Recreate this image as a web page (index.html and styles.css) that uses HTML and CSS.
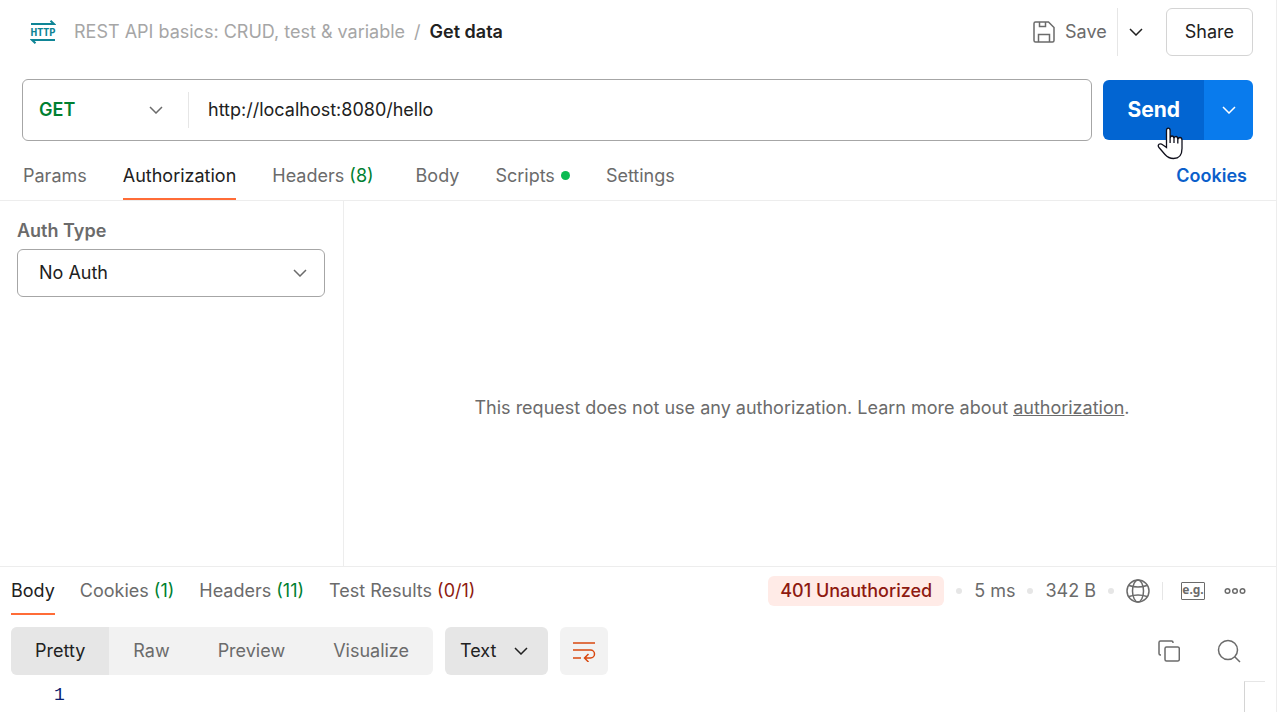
FILE: index.html
```html
<!DOCTYPE html>
<html lang="en">
<head>
<meta charset="utf-8">
<meta name="viewport" content="width=device-width, initial-scale=1">
<title>Get data</title>
<link rel="stylesheet" href="styles.css">
</head>
<body>
<svg class="symbols" aria-hidden="true">
  <symbol id="chevron" viewBox="0 0 14 8"><path d="M1 1l6 6 6-6"/></symbol>
</svg>
<main class="app">
  <header class="header">
    <svg class="http-icon" viewBox="0 0 26 24" role="img" aria-label="HTTP">
      <path d="M1 4h23L20.500 .7M25 20H2L5.500 23.300"/>
      <text x="13" y="16" text-anchor="middle">HTTP</text>
    </svg>
    <nav class="breadcrumb" aria-label="Breadcrumb">
      <a href="#collection">REST API basics: CRUD, test &amp; variable</a>
      <span>/</span>
      <strong>Get data</strong>
    </nav>
    <div class="save-group">
      <button class="save" type="button">
        <svg class="icon-save" viewBox="0 0 22 22" aria-hidden="true"><path d="M2.500 1H15.500L21 6.500V19.500Q21 21 19.500 21H2.500Q1 21 1 19.500V2.500Q1 1 2.500 1ZM6.500 1V5.500H12.500V1M5.500 21V13.500H16.500V21"/></svg>
        Save
      </button>
      <button class="save-more" type="button" aria-label="Save options"><svg class="chevron"><use href="#chevron"/></svg></button>
    </div>
    <button class="share" type="button">Share</button>
  </header>

  <form class="request">
    <div class="url-box">
      <div class="select method">
        <select aria-label="Method"><option>GET</option></select>
        <svg class="chevron"><use href="#chevron"/></svg>
      </div>
      <input class="url" type="text" aria-label="Request URL" value="http://localhost:8080/hello">
    </div>
    <div class="send-group">
      <button class="send" type="button">Send</button>
      <button class="send-more" type="button" aria-label="Send options"><svg class="chevron"><use href="#chevron"/></svg></button>
      <svg class="pointer" viewBox="0 0 26 33" aria-hidden="true"><path d="M9.500 20.500V3.500Q9.500 1.200 11.300 1.200T13.100 3.500V11.500Q13.300 9 15 9T17 11.500Q17.300 9.500 19 9.500T20.800 12.500Q21.300 10.500 23 10.500T25 13V21.500Q25 31.500 16.500 31.500Q11.500 31.500 8 27.500L2 20.500Q.5 18.500 2 17.300T6 18ZM13.100 11.500V16M17 11.500V16M20.800 12.500V16.500"/></svg>
    </div>
  </form>

  <nav class="tabs" aria-label="Request">
    <button type="button">Params</button>
    <button type="button" class="active">Authorization</button>
    <button type="button">Headers <span class="ok">(8)</span></button>
    <button type="button">Body</button>
    <button type="button">Scripts<i class="script-dot"></i></button>
    <button type="button">Settings</button>
    <a class="cookies" href="#cookies">Cookies</a>
  </nav>

  <section class="auth">
    <div class="auth-side">
      <label for="auth-type">Auth Type</label>
      <div class="select auth-select">
        <select id="auth-type"><option>No Auth</option></select>
        <svg class="chevron"><use href="#chevron"/></svg>
      </div>
    </div>
    <div class="auth-info">
      <p>This request does not use any authorization. Learn more about <a href="#authorization">authorization</a>.</p>
    </div>
  </section>

  <section class="response">
    <div class="response-bar">
      <nav class="response-tabs" aria-label="Response">
        <button type="button" class="active">Body</button>
        <button type="button">Cookies <span class="ok">(1)</span></button>
        <button type="button">Headers <span class="ok">(11)</span></button>
        <button type="button">Test Results <span class="fail">(0/1)</span></button>
      </nav>
      <div class="meta">
        <span class="status">401 Unauthorized</span>
        <i class="dot"></i>
        <span>5 ms</span>
        <i class="dot"></i>
        <span>342 B</span>
        <i class="dot"></i>
        <button class="icon-button" type="button" aria-label="Network">
          <svg width="24" height="24" viewBox="0 0 24 24"><circle cx="12" cy="12" r="11"/><ellipse cx="12" cy="12" rx="5.500" ry="11"/><path d="M3 6.500Q12 9.500 21 6.500M3 17.500Q12 14.500 21 17.500"/></svg>
        </button>
      </div>
      <div class="actions">
        <button class="eg" type="button">e.g.</button>
        <button class="icon-button" type="button" aria-label="More actions">
          <svg width="22" height="8" viewBox="0 0 22 8"><circle cx="3.500" cy="4" r="2.300"/><circle cx="11" cy="4" r="2.300"/><circle cx="18.500" cy="4" r="2.300"/></svg>
        </button>
      </div>
    </div>

    <div class="toolbar">
      <div class="views">
        <button type="button" class="active">Pretty</button>
        <button type="button">Raw</button>
        <button type="button">Preview</button>
        <button type="button">Visualize</button>
      </div>
      <div class="select format">
        <select aria-label="Format"><option>Text</option></select>
        <svg class="chevron"><use href="#chevron"/></svg>
      </div>
      <button class="wrap" type="button" aria-label="Wrap lines">
        <svg width="24" height="22" viewBox="0 0 24 22"><path d="M1 3H23M1 10H18.500a4 4 0 0 1 0 8H13M1 18H9M16.500 14L12.500 18 16.500 22"/></svg>
      </button>
      <div class="tools">
        <button class="icon-button" type="button" aria-label="Copy">
          <svg width="22" height="22" viewBox="0 0 22 22"><rect x="7" y="7" width="14.300" height="14" rx="1.500"/><path d="M15 3V2.500Q15 1 13.500 1H2.500Q1 1 1 2.500V13.500Q1 15 2.500 15H3"/></svg>
        </button>
        <button class="icon-button" type="button" aria-label="Search">
          <svg width="24" height="24" viewBox="0 0 24 24"><circle cx="11" cy="11" r="9.500"/><path d="M17.700 17.700L23 23"/></svg>
        </button>
      </div>
    </div>

    <div class="code">
      <span class="line-number">1</span>
      <div class="minimap"></div>
    </div>
  </section>
</main>
</body>
</html>
```
FILE: styles.css
```css
* {
  box-sizing: border-box;
}

body {
  margin: 0;
  background: #fff;
  color: #6b6b6b;
  font: 18px/24px Inter, sans-serif;
}

button,
input,
select {
  margin: 0;
  padding: 0;
  border: 0;
  border-radius: 0;
  background: none;
  color: inherit;
  font: inherit;
}

button {
  white-space: nowrap;
}

a {
  color: inherit;
}

svg {
  display: block;
  flex: none;
  fill: none;
  stroke: currentColor;
  stroke-width: 1.5;
}

.symbols {
  position: absolute;
  width: 0;
  height: 0;
}

.chevron {
  width: 14px;
  height: 8px;
}

.ok {
  color: #007f31;
}

.fail {
  color: #8e1a10;
}

.app {
  display: flex;
  flex-direction: column;
  min-height: 100vh;
  margin-right: 3px;
  border-right: 1px solid #ededed;
}

/* Header */

.header {
  display: flex;
  align-items: center;
  padding: 8px 23px 0 30px;
}

.http-icon {
  width: 26px;
  height: 24px;
  color: #0f8596;
  stroke-width: 2;
}

.http-icon text {
  fill: currentColor;
  stroke: none;
  font: 700 11px "Liberation Sans Narrow", "Roboto Condensed", Roboto, sans-serif;
}

.breadcrumb {
  display: flex;
  flex: 1;
  gap: 9px;
  margin-left: 18px;
  color: #a6a6a6;
}

.breadcrumb a {
  text-decoration: none;
}

.breadcrumb strong {
  color: #212121;
  font-weight: 600;
}

.save-group {
  display: flex;
  height: 48px;
}

.save {
  display: flex;
  align-items: center;
  gap: 10px;
  padding-right: 10px;
  border-right: 1px solid #e6e6e6;
}

.icon-save {
  width: 22px;
  height: 22px;
}

.save-more {
  padding: 0 11px;
  color: #212121;
}

.share {
  height: 48px;
  margin-left: 12px;
  padding: 0 18px;
  border: 1px solid #d4d4d4;
  border-radius: 6px;
  color: #212121;
}

/* Request line */

.request {
  display: flex;
  align-items: center;
  gap: 11px;
  padding: 23px 23px 0 22px;
}

.url-box {
  display: flex;
  flex: 1;
  align-items: center;
  height: 62px;
  border: 1px solid #a6a6a6;
  border-radius: 6px;
}

.select {
  display: grid;
  align-items: center;
}

.select select,
.select .chevron {
  grid-area: 1 / 1;
}

.select select {
  width: 100%;
  height: 100%;
  appearance: none;
}

.select .chevron {
  justify-self: end;
  pointer-events: none;
}

.method {
  width: 166px;
  height: 36px;
  padding: 0 25px 0 16px;
  border-right: 1px solid #e6e6e6;
}

.method select {
  color: #007f31;
  font-weight: 600;
}

.url {
  flex: 1;
  min-width: 0;
  padding: 0 19px;
  color: #212121;
}

.send-group {
  position: relative;
  display: flex;
  height: 60px;
  color: #fff;
}

.send {
  padding: 0 24px;
  border-radius: 6px 0 0 6px;
  background: #0265d2;
  font-size: 21px;
  font-weight: 700;
}

.send-more {
  padding: 0 17px 0 18px;
  border-radius: 0 6px 6px 0;
  background: #097bed;
}

.pointer {
  position: absolute;
  top: 47px;
  left: 54px;
  width: 26px;
  height: 33px;
  fill: #fff;
  stroke: #10101c;
  stroke-width: 1.3;
}

/* Request tabs */

.tabs {
  display: flex;
  gap: 36px;
  height: 60px;
  padding: 0 29px 0 23px;
  border-bottom: 1px solid #ededed;
}

.tabs button,
.response-tabs button {
  padding-bottom: 10px;
  border-bottom: 2px solid transparent;
}

.tabs button {
  padding-top: 23px;
}

.response-tabs button {
  padding-top: 12px;
}

.tabs .active,
.response-tabs .active {
  border-bottom-color: #ff6c37;
  color: #212121;
}

.tabs button:nth-child(3) {
  margin-right: 6px;
}

.script-dot {
  display: inline-block;
  width: 9px;
  height: 9px;
  margin-bottom: 2px;
  margin-left: 6px;
  border-radius: 50%;
  background: #0cbb52;
}

.cookies {
  align-self: center;
  margin-left: auto;
  padding-top: 10px;
  color: #0b5fcb;
  font-weight: 600;
  text-decoration: none;
}

/* Authorization */

.auth {
  display: flex;
  flex: 1;
}

.auth-side {
  flex: none;
  width: 344px;
  padding: 18px 18px 18px 17px;
  border-right: 1px solid #ededed;
}

.auth-side label {
  display: block;
  margin-bottom: 6px;
  font-weight: 600;
}

.auth-select {
  height: 48px;
  padding: 0 17px 0 21px;
  border: 1px solid #a6a6a6;
  border-radius: 6px;
}

.auth-select select {
  color: #212121;
}

.auth-info {
  display: flex;
  flex: 1;
  align-items: center;
  justify-content: center;
  padding: 48px 24px 0 8px;
}

.auth-info p {
  margin: 0;
}

/* Response */

.response {
  border-top: 1px solid #ededed;
}

.response-bar {
  display: flex;
  align-items: center;
  justify-content: space-between;
  padding: 0 30px 0 11px;
}

.response-tabs {
  display: flex;
  flex: 1;
  gap: 25px;
}

.meta {
  display: flex;
  align-items: center;
  gap: 12px;
  padding-right: 12px;
  border-right: 1px solid #e6e6e6;
  height: 18px;
}

.status {
  padding: 3px 12px;
  border-radius: 6px;
  background: #ffebe7;
  color: #8e1a10;
  font-weight: 500;
}

.dot {
  width: 6px;
  height: 6px;
  border-radius: 50%;
  background: #e6e6e6;
}

.icon-button {
  display: flex;
}

.actions {
  display: flex;
  align-items: center;
  gap: 19px;
  margin-left: 18px;
}

.eg {
  display: flex;
  justify-content: center;
  width: 24px;
  height: 18px;
  border: 1px solid #6b6b6b;
  border-radius: 1px;
  font: 700 12px/14px "Noto Sans", sans-serif;
}

.toolbar {
  display: flex;
  gap: 12px;
  margin-top: 12px;
  padding: 0 35px 0 11px;
}

.views {
  display: flex;
  height: 48px;
  overflow: hidden;
  border-radius: 6px;
  background: #f2f2f2;
}

.views button {
  padding: 0 24px;
}

.views .active {
  background: #e6e6e6;
  color: #212121;
}

.format {
  width: 103px;
  padding: 0 20px 0 15px;
  border-radius: 6px;
  background: #e6e6e6;
  color: #212121;
}

.wrap {
  display: grid;
  place-items: center;
  width: 48px;
  border-radius: 6px;
  background: #f2f2f2;
  color: #d9480f;
}

.tools {
  display: flex;
  align-items: center;
  gap: 37px;
  margin-left: auto;
}

.code {
  display: flex;
  justify-content: space-between;
  padding: 6px 11px 0 54px;
}

.line-number {
  color: #0b216f;
  font: 18px/28px "Liberation Mono", monospace;
}

.minimap {
  width: 21px;
  height: 31px;
  border-top: 1px solid #e6e6e6;
  border-left: 1px solid #d4d4d4;
}
```
